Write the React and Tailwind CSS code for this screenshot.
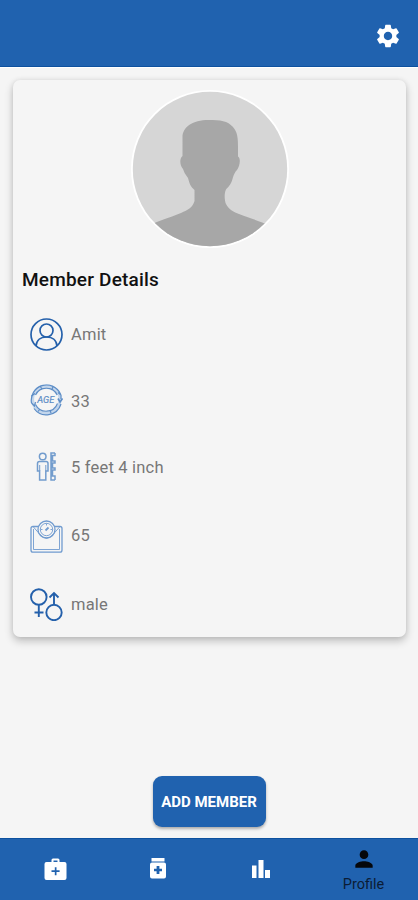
import { MdSettings, MdPerson } from "react-icons/md";

const BLUE = "#2460ab";

function Avatar() {
  return (
    <svg viewBox="0 0 158 158" className="h-[158px] w-[158px]">
      <defs>
        <clipPath id="avatar">
          <circle cx="79" cy="79" r="77.200" />
        </clipPath>
      </defs>
      <circle cx="79" cy="79" r="79" fill="#fff" />
      <g clipPath="url(#avatar)">
        <rect width="158" height="158" fill="#d6d6d6" />
        <path
          fill="#a7a7a7"
          d="M79 30C91 29.500 99 32 103.500 39C107 44 107 51 107 57V66.500C110 68 109 76 106 80C104 82 103 84 101.500 89C100 95 97 97 95 99.500C93 104 93.500 110 95 114C98 120 103 122 108 124C121 129 132 132 139 136V160H18V136C26 131 38 128 50 123C57 120 62 117 63.500 111V100C60 97 58.500 94 57 88C54 84 53 82 52 79C48.500 75 48.500 68 51.500 66V48C51 37 62 29.500 79 30Z"
        />
      </g>
    </svg>
  );
}

function NameIcon() {
  return (
    <svg viewBox="0 0 33 33" className="h-[33px] w-[33px]" fill="none" stroke={BLUE} strokeWidth="1.7">
      <circle cx="16.500" cy="16.500" r="15.500" />
      <circle cx="16.500" cy="12.500" r="6.500" />
      <path d="M6 28C6.500 22 11 19 16.500 19S26.500 22 27 28" />
    </svg>
  );
}

function AgeIcon() {
  return (
    <svg viewBox="0 0 33 33" className="h-[33px] w-[33px]" fill="none">
      <circle cx="16.300" cy="16.500" r="13.700" stroke="#c3d6ec" strokeWidth="3" />
      <g stroke="#5d8dc6" strokeWidth="1.200">
        <path d="M1.500 20A15.300 15.300 0 0 1 30.500 11M31 21A15.300 15.300 0 0 1 4 25.500" />
        <path d="M5.500 12A12 12 0 0 1 27.200 12M27.500 20.500A12 12 0 0 1 5.500 21.500" />
        <path d="M1.500 20L4.500 23L5.500 19M28 9.500L31 12V16M1.500 13L5 10.500M10 3L12 6M21 30L20 27M23 4L21.500 7M8 28.500L10 26" />
        <path d="M28 15.500L30 19L32.500 15.500" strokeWidth="1.600" />
      </g>
      <text x="15.800" y="19.800" textAnchor="middle" fontFamily="Roboto, sans-serif" fontSize="9" fontStyle="italic" fill="#5d8dc6" stroke="#5d8dc6" strokeWidth="0.200" textLength="17" lengthAdjust="spacingAndGlyphs">
        AGE
      </text>
    </svg>
  );
}

function HeightIcon() {
  return (
    <svg viewBox="0 0 33 33" className="h-[33px] w-[33px]" fill="none" stroke="#729ccd" strokeWidth="1.500">
      <circle cx="12.700" cy="5.500" r="3.300" />
      <path d="M9.500 10.500H16C17.300 10.500 18 11.500 18 12.500V20H15.800V29H9.600V20H7.500V12.500C7.500 11.500 8.200 10.500 9.500 10.500Z" />
      <path d="M9.700 14V20M15.800 14V20" strokeWidth="1" />
      <path d="M25 2H21V29H25M25 2V4.500H22.500V10H25V12H22.500V17H25V19H22.500V25H25V29" />
    </svg>
  );
}

function WeightIcon() {
  return (
    <svg viewBox="0 0 33 33" className="h-[33px] w-[33px]" fill="none" stroke="#709bcf" strokeWidth="1.300">
      <path d="M8 6.500H3C1.700 6.500 1 7.300 1 8.500V30C1 31.500 1.700 32.200 3 32.200H30C31.500 32.200 32 31.500 32 30V8.500C32 7.300 31.300 6.500 30 6.500H25" />
      <path d="M3 6.500L10 14.500Q16.500 22 23 14.500L30 6.500M3.500 9V29.500H29.500V9" strokeWidth="0.900" />
      <circle cx="16.500" cy="9.500" r="8.500" />
      <circle cx="16.500" cy="9.500" r="6.200" strokeWidth="0.900" />
      <path d="M15.500 10.500L18.500 7.500" strokeWidth="1.800" />
      <path d="M16.500 3.500V5.500M10.500 9.500H12.500M20.500 9.500H22.500" strokeWidth="0.900" />
    </svg>
  );
}

function GenderIcon() {
  return (
    <svg viewBox="0 0 33 33" className="h-[33px] w-[33px]" fill="none" stroke={BLUE} strokeWidth="1.900">
      <circle cx="8.800" cy="9" r="7.800" />
      <path d="M8.800 17V29M4.500 24.500H13.500" />
      <circle cx="24" cy="24.500" r="7.700" />
      <path d="M24 16.500V5M19.500 9.500L24 5L28.500 9.500" />
    </svg>
  );
}

function MedkitIcon() {
  return (
    <svg viewBox="0 0 23 23" className="h-[23px] w-[23px]">
      <path
        fill="#fff"
        fillRule="evenodd"
        d="M7.500 4V2Q7.500 .5 9 .5H14Q15.500 .5 15.500 2V4H20.500Q22.500 4 22.500 6V20Q22.500 22 20.500 22H2.500Q.5 22 .5 20V6Q.5 4 2.500 4ZM9.500 2.500V4H13.500V2.500ZM10.800 9.200V12.300H7.500V14H10.800V17.300H12.500V14H15.600V12.300H12.500V9.200Z"
      />
    </svg>
  );
}

function MedicineIcon() {
  return (
    <svg viewBox="0 0 16 21" className="h-[21px] w-4">
      <path fill="#fff" d="M1.500 0H14.500V3.500H1.500Z" />
      <path
        fill="#fff"
        fillRule="evenodd"
        d="M2 4.500H14Q16 4.500 16 6.500V18.500Q16 20.500 14 20.500H2Q0 20.500 0 18.500V6.500Q0 4.500 2 4.500ZM6.600 8V10.700H4V13.300H6.600V16H9.400V13.300H12V10.700H9.400V8Z"
      />
    </svg>
  );
}

function ChartIcon() {
  return (
    <svg viewBox="0 0 18 18" className="h-[18px] w-[18px]" fill="#fff">
      <path d="M0 5.500H4.500V18H0ZM6.500 0H11.500V18H6.500ZM13 10H18V18H13Z" />
    </svg>
  );
}

const DETAILS = [
  { icon: NameIcon, value: "Amit", row: "mt-[26px]", text: "pt-[2px]" },
  { icon: AgeIcon, value: "33", row: "mt-[32px]", text: "pt-[5px]" },
  { icon: HeightIcon, value: "5 feet 4 inch", row: "mt-[35px]", text: "pt-[2px]" },
  { icon: WeightIcon, value: "65", row: "mt-[36px]", text: "pt-0" },
  { icon: GenderIcon, value: "male", row: "mt-[35px]", text: "pt-px" },
];

export default function App() {
  return (
    <div className="flex h-[900px] w-[418px] flex-col overflow-hidden bg-[#f5f5f5] font-['Roboto',sans-serif]">
      <header className="flex h-[67px] shrink-0 items-center justify-end border-b border-[#0d519f] bg-[#2062af] pt-[5px] pr-4">
        <MdSettings className="h-7 w-7 text-white" />
      </header>

      <main className="flex flex-1 flex-col items-center border-t border-white pt-[12px]">
        <section className="mr-[-1px] h-[557px] w-[393px] rounded-[7px] bg-[#f5f5f5] pt-[10px] shadow-[0_4px_8px_rgba(0,0,0,0.23),0_0_5px_rgba(0,0,0,0.08)]">
          <div className="flex justify-center">
            <Avatar />
          </div>
          <h1 className="mt-5 ml-[9px] text-[19px] leading-6 font-medium tracking-[0.2px] text-[#111]">
            Member Details
          </h1>
          {DETAILS.map(({ icon: Icon, value, row, text }) => (
            <div key={value} className={`ml-[17px] flex h-[33px] items-center gap-[8px] ${row}`}>
              <Icon />
              <span className={`text-[16.5px] tracking-[0.2px] text-[#777] ${text}`}>{value}</span>
            </div>
          ))}
        </section>

        <button className="mt-[139px] h-[51px] w-[113px] rounded-[9px] bg-[#2062af] pt-[2px] text-[15px] font-bold text-white shadow-[0_2px_3px_rgba(0,0,0,0.3)]">
          ADD MEMBER
        </button>
      </main>

      <nav className="grid h-[62px] shrink-0 grid-cols-[110px_97px_108px_97px] border-t border-[#0d519f] bg-[#2062af]">
        <div className="flex justify-center pt-[19px]">
          <MedkitIcon />
        </div>
        <div className="flex justify-center pt-[19px] pr-[2px]">
          <MedicineIcon />
        </div>
        <div className="flex justify-center pt-[21px]">
          <ChartIcon />
        </div>
        <div className="flex flex-col items-center pt-[7px]">
          <MdPerson className="h-[26px] w-[26px] text-[#05070b]" />
          <span className="pt-[2px] text-[14.5px] leading-[22px] text-[#0b1c35]">Profile</span>
        </div>
      </nav>
    </div>
  );
}
